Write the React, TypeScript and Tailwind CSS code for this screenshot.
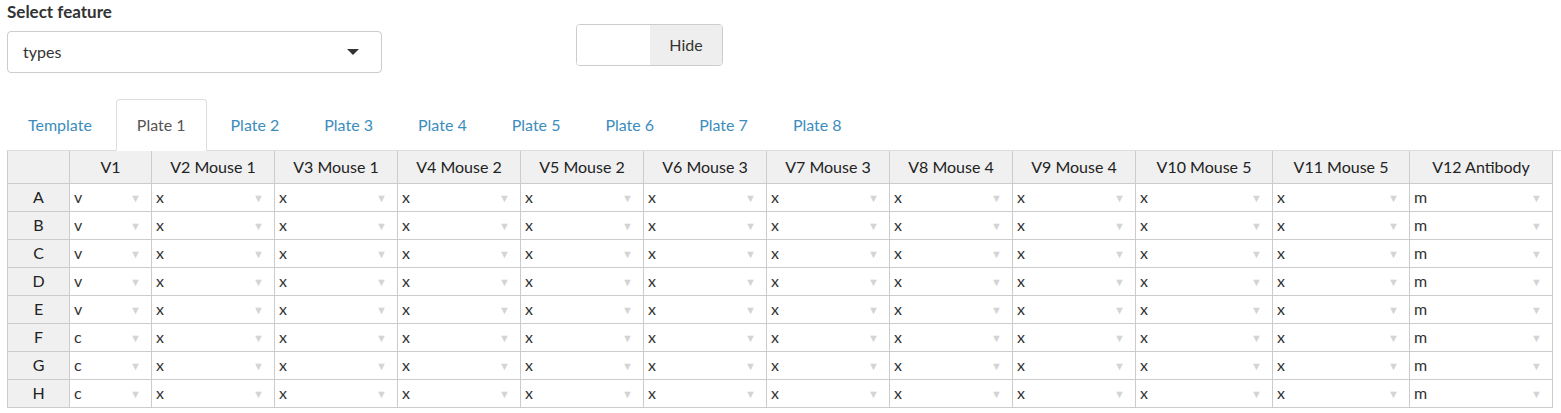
import React from 'react'

const columns = [
  { label: 'V1', w: 82 },
  { label: 'V2 Mouse 1', w: 123 },
  { label: 'V3 Mouse 1', w: 123 },
  { label: 'V4 Mouse 2', w: 123 },
  { label: 'V5 Mouse 2', w: 123 },
  { label: 'V6 Mouse 3', w: 123 },
  { label: 'V7 Mouse 3', w: 123 },
  { label: 'V8 Mouse 4', w: 123 },
  { label: 'V9 Mouse 4', w: 123 },
  { label: 'V10 Mouse 5', w: 137 },
  { label: 'V11 Mouse 5', w: 137 },
  { label: 'V12 Antibody', w: 143 },
]

const rows = ['A', 'B', 'C', 'D', 'E', 'F', 'G', 'H']
const tabs = ['Template', 'Plate 1', 'Plate 2', 'Plate 3', 'Plate 4', 'Plate 5', 'Plate 6', 'Plate 7', 'Plate 8']

function cellValue(row: number, col: number) {
  if (col === 0) return row < 5 ? 'v' : 'c'
  if (col === 11) return 'm'
  return 'x'
}

export default function App() {
  return (
    <div className="w-[1561px] h-[413px] bg-white text-[#333] overflow-hidden" style={{ fontFamily: 'Lato, "Noto Sans", sans-serif' }}>
      <div className="flex items-start pl-[7px] pt-[2px]">
        <div className="w-[375px]">
          <div className="text-[17px] font-bold text-[#333] leading-[20px]">Select feature</div>
          <div className="mt-[9px] h-[42px] border border-[#ccc] rounded-[4px] flex items-center justify-between pl-[15px] pr-[22px]">
            <span className="text-[16px]">types</span>
            <span className="w-0 h-0 border-l-[6px] border-r-[6px] border-t-[6px] border-l-transparent border-r-transparent border-t-[#333]" />
          </div>
        </div>
        <div className="ml-[194px] mt-[22px] flex h-[42px] w-[147px] border border-[#ccc] rounded-[4px] overflow-hidden">
          <div className="w-[73px] bg-white" />
          <div className="flex-1 bg-[#eee] flex items-center justify-center text-[16px] text-[#333]">Hide</div>
        </div>
      </div>

      <div className="mt-[26px] ml-[7px] flex border-b border-[#ddd] h-[52px]">
        {tabs.map((t) => (
          <div
            key={t}
            className={`px-5 mr-[3px] flex items-center text-[16px] rounded-t-[4px] border ${
              t === 'Plate 1'
                ? 'border-[#ddd] border-b-white bg-white text-[#555] -mb-px'
                : 'border-transparent text-[#3c8dbc]'
            }`}
          >
            {t}
          </div>
        ))}
      </div>

      <div className="ml-[7px]">
        <table className="border-collapse text-[16px] table-fixed">
          <thead>
            <tr className="h-[32px]">
              <th className="w-[62px] bg-[#f0f0f0] border border-[#ccc] border-t-0 font-normal" />
              {columns.map((c) => (
                <th
                  key={c.label}
                  style={{ width: c.w }}
                  className="bg-[#f0f0f0] border border-[#ccc] border-t-0 font-normal text-[#222] px-1"
                >
                  {c.label}
                </th>
              ))}
            </tr>
          </thead>
          <tbody>
            {rows.map((r, ri) => (
              <tr key={r} className="h-[28px]">
                <td className="bg-[#f0f0f0] border border-[#ccc] text-center text-[#222]">{r}</td>
                {columns.map((c, ci) => (
                  <td key={c.label} className="border border-[#ccc] pl-[4px] pr-[10px]">
                    <div className="flex items-center justify-between">
                      <span>{cellValue(ri, ci)}</span>
                      <span className="text-[11px] leading-none text-[#d4d4d4]">▼</span>
                    </div>
                  </td>
                ))}
              </tr>
            ))}
          </tbody>
        </table>
      </div>
    </div>
  )
}
